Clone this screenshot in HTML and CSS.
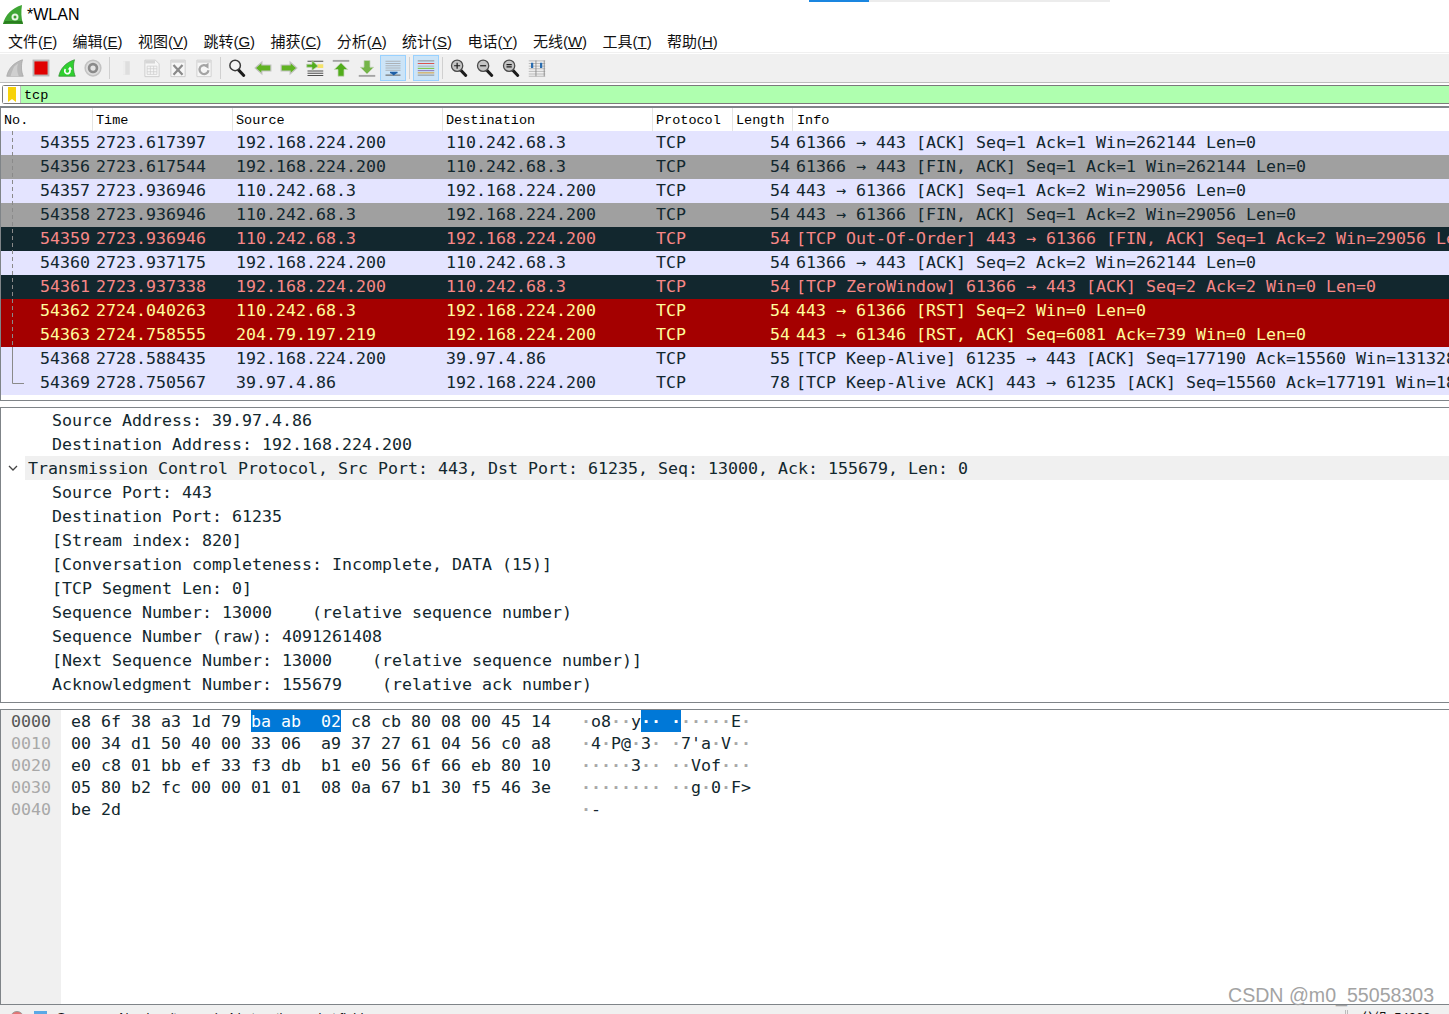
FILE: index.html
```html
<!DOCTYPE html>
<html lang="zh-CN">
<head>
<meta charset="utf-8">
<title>*WLAN</title>
<link rel="stylesheet" href="styles.css">
</head>
<body>
<div class="app">
  <div class="tabline"><span class="tab-blue"></span><span class="tab-gray"></span></div>
  <header class="titlebar">
    <svg class="app-icon" width="20" height="20" viewBox="0 0 20 20"><path d="M0 19C2 10 9 3 19 0c-1 6-1 13 1 19z" fill="#3fa535"/><path d="M0 19c6-1 13-1 20 0l-1-3H2z" fill="#2a7d1f"/><circle cx="12" cy="12" r="3.500" fill="#e8f5e4"/><circle cx="12" cy="12" r="1.500" fill="#3c9a2c"/></svg>
    <span class="title-text">*WLAN</span>
  </header>
  <nav class="menubar">
    <span class="menu-item">文件(<u>F</u>)</span>
    <span class="menu-item">编辑(<u>E</u>)</span>
    <span class="menu-item">视图(<u>V</u>)</span>
    <span class="menu-item">跳转(<u>G</u>)</span>
    <span class="menu-item">捕获(<u>C</u>)</span>
    <span class="menu-item">分析(<u>A</u>)</span>
    <span class="menu-item">统计(<u>S</u>)</span>
    <span class="menu-item">电话(<u>Y</u>)</span>
    <span class="menu-item">无线(<u>W</u>)</span>
    <span class="menu-item">工具(<u>T</u>)</span>
    <span class="menu-item">帮助(<u>H</u>)</span>
  </nav>
  <div class="toolbar">
    <span class="tool"><svg viewBox="0 0 24 24"><path d="M1 23C3 13 10 5 22 1c-2 7-2 15 1 22z" fill="#b9b9b9" stroke="#a6a6a6"/><path d="M11 10C9 14 7 19 6 23h11c-2-5-3-11-1-17z" fill="#cfcfcf"/></svg></span>
    <span class="tool"><svg viewBox="0 0 24 24"><rect x="2" y="2" width="20" height="20" fill="#e00000" stroke="#b9b9b9" stroke-width="2.500"/></svg></span>
    <span class="tool"><svg viewBox="0 0 24 24"><path d="M1 23C3 13 10 5 22 1c-2 7-2 15 1 22z" fill="#2fd02f" stroke="#3a8f3a"/><path d="M16 13v3a3.500 3.500 0 1 1-6-2.400" fill="none" stroke="#fff" stroke-width="2.300"/><path d="M13 14l3-4 3 4z" fill="#fff"/></svg></span>
    <span class="tool"><svg viewBox="0 0 24 24"><circle cx="12" cy="12" r="10.500" fill="#dcdcdc" stroke="#c2c2c2" stroke-width="2"/><circle cx="12" cy="12" r="7" fill="#8a8a8a"/><circle cx="12" cy="12" r="3.500" fill="#e4e4e4"/></svg></span>
    <span class="tool-sep"></span>
    <span class="tool"><svg viewBox="0 0 24 24"><path d="M8 3h9v18H8z" fill="#dedede"/><path d="M8 3h3v18H8z" fill="#ededed"/></svg></span>
    <span class="tool"><svg viewBox="0 0 24 24"><path d="M2.500 1.500h14l5 5v17h-19z" fill="#f6f6f6" stroke="#c4c4c4"/><path d="M5.500 9.500h13v11h-13zM5.500 13h13M5.500 17h13M9.800 9.500v11M14.200 9.500v11" fill="none" stroke="#cdcdcd"/><path d="M3 2h13v4H3z" fill="#d6d6d6"/></svg></span>
    <span class="tool"><svg viewBox="0 0 24 24"><path d="M2.500 1.500h19v22h-19z" fill="#f6f6f6" stroke="#c0c0c0"/><path d="M3 2h18v3H3z" fill="#d8d8d8"/><path d="M6 8l12 13M18 8L6 21" stroke="#8a8a8a" stroke-width="3"/></svg></span>
    <span class="tool"><svg viewBox="0 0 24 24"><path d="M2.500 1.500h19v22h-19z" fill="#f6f6f6" stroke="#c8c8c8"/><path d="M3 2h18v3H3z" fill="#d8d8d8"/><path d="M16.500 10a6 6 0 1 0 1.500 5" fill="none" stroke="#a4a4a4" stroke-width="3"/><path d="M12 9l6-4v8z" fill="#a4a4a4"/></svg></span>
    <span class="tool-sep"></span>
    <span class="tool"><svg viewBox="0 0 24 24"><path d="M14 14.500l7 7.500" stroke="#1c1c1c" stroke-width="4" stroke-linecap="round"/><circle cx="9.500" cy="8.500" r="7" fill="#f4f4f4" stroke="#3a3a3a" stroke-width="2"/></svg></span>
    <span class="tool"><svg viewBox="0 0 24 24"><path d="M1.500 12l9-8v4h12v8h-12v4z" fill="#60b322" stroke="#c2c2c2" stroke-width="1.500"/></svg></span>
    <span class="tool"><svg viewBox="0 0 24 24"><path d="M22.500 12l-9-8v4h-12v8h12v4z" fill="#60b322" stroke="#c2c2c2" stroke-width="1.500"/></svg></span>
    <span class="tool"><svg viewBox="0 0 24 24"><path d="M2 3h21M2 16h21M2 19h21M2 22h21" stroke="#4a4a4a" stroke-width="1.300"/><path d="M15 7h8v5h-8z" fill="#f4e36a"/><path d="M1 7h7V2l8 7.500L8 15v-4H1z" fill="#52ad1c" stroke="#b9c9ad"/></svg></span>
    <span class="tool"><svg viewBox="0 0 24 24"><path d="M1 2.500h22" stroke="#a4a4a4" stroke-width="2.500"/><path d="M12 5l9 9h-5v9H8v-9H3z" fill="#52ad1c" stroke="#c6d4bc"/></svg></span>
    <span class="tool"><svg viewBox="0 0 24 24"><path d="M1 22.500h22" stroke="#a4a4a4" stroke-width="2.500"/><path d="M12 20l9-9h-5V2H8v9H3z" fill="#74b548" stroke="#c6d4bc"/></svg></span>
    <span class="tool tool-on"><svg viewBox="0 0 24 24"><path d="M2 3h20M2 6h20M2 9h20M2 12h20M2 15h20" stroke="#a0a0a0"/><path d="M2 21.500h20" stroke="#6a6a6a" stroke-width="1.500"/><path d="M13 22l-5-4h10z" fill="#1f5fa6"/><path d="M8 17h10v2H8z" fill="#1f5fa6"/></svg></span>
    <span class="tool-sep"></span>
    <span class="tool tool-on"><svg viewBox="0 0 24 24"><path d="M1 2.500h22" stroke="#777"/><path d="M1 6h22" stroke="#d9534f" stroke-width="1.400"/><path d="M1 9.500h22" stroke="#a0a0a0"/><path d="M1 12.500h22" stroke="#7cc243" stroke-width="1.400"/><path d="M1 15.500h22" stroke="#8a78c0" stroke-width="1.400"/><path d="M1 18.500h22" stroke="#d6a13a" stroke-width="1.400"/><path d="M1 21.500h22" stroke="#777"/></svg></span>
    <span class="tool-sep"></span>
    <span class="tool"><svg viewBox="0 0 24 24"><path d="M14 14.500l7 7.500" stroke="#1c1c1c" stroke-width="4" stroke-linecap="round"/><circle cx="9.500" cy="9" r="7.500" fill="#c4c4c4" stroke="#4a4a4a" stroke-width="1.700"/><path d="M5.500 9h8M9.500 5v8" stroke="#1c1c1c" stroke-width="1.600"/></svg></span>
    <span class="tool"><svg viewBox="0 0 24 24"><path d="M14 14.500l7 7.500" stroke="#1c1c1c" stroke-width="4" stroke-linecap="round"/><circle cx="9.500" cy="9" r="7.500" fill="#c4c4c4" stroke="#4a4a4a" stroke-width="1.700"/><path d="M5.500 9h8" stroke="#1c1c1c" stroke-width="1.600"/></svg></span>
    <span class="tool"><svg viewBox="0 0 24 24"><path d="M14 14.500l7 7.500" stroke="#1c1c1c" stroke-width="4" stroke-linecap="round"/><circle cx="9.500" cy="9" r="7.500" fill="#c4c4c4" stroke="#4a4a4a" stroke-width="1.700"/><path d="M6 7.500h7M6 10.500h7" stroke="#1c1c1c" stroke-width="1.400"/></svg></span>
    <span class="tool"><svg viewBox="0 0 24 24"><path d="M1 2.500h22M1 6h22M1 9.500h22M1 13h22M1 16.500h22M1 20h22M1 23h22" stroke="#a8a8a8"/><path d="M10 2h1.200v21H10zM21 2h1.200v21H21z" fill="#8a8a8a"/><path d="M4 5h3v7H4zM16 5h3v7h-3z" fill="#2a6db0"/></svg></span>
  </div>
  <div class="filterbar">
    <span class="filter-mark"><svg width="10" height="15" viewBox="0 0 10 15"><path d="M1 0h8v15l-4-3-4 3z" fill="#f7d20a"/></svg></span>
    <span class="filter-text">tcp</span>
  </div>
  <section class="packets">
    <div class="cols">
      <span class="hcell">No.</span><span class="hcell">Time</span><span class="hcell">Source</span><span class="hcell">Destination</span><span class="hcell">Protocol</span><span class="hcell">Length</span><span class="hcell">Info</span>
    </div>
    <div class="row tcp"><span class="no">54355</span><span>2723.617397</span><span>192.168.224.200</span><span>110.242.68.3</span><span>TCP</span><span class="len">54</span><span>61366 → 443 [ACK] Seq=1 Ack=1 Win=262144 Len=0</span></div>
    <div class="row fin"><span class="no">54356</span><span>2723.617544</span><span>192.168.224.200</span><span>110.242.68.3</span><span>TCP</span><span class="len">54</span><span>61366 → 443 [FIN, ACK] Seq=1 Ack=1 Win=262144 Len=0</span></div>
    <div class="row tcp"><span class="no">54357</span><span>2723.936946</span><span>110.242.68.3</span><span>192.168.224.200</span><span>TCP</span><span class="len">54</span><span>443 → 61366 [ACK] Seq=1 Ack=2 Win=29056 Len=0</span></div>
    <div class="row fin"><span class="no">54358</span><span>2723.936946</span><span>110.242.68.3</span><span>192.168.224.200</span><span>TCP</span><span class="len">54</span><span>443 → 61366 [FIN, ACK] Seq=1 Ack=2 Win=29056 Len=0</span></div>
    <div class="row bad"><span class="no">54359</span><span>2723.936946</span><span>110.242.68.3</span><span>192.168.224.200</span><span>TCP</span><span class="len">54</span><span>[TCP Out-Of-Order] 443 → 61366 [FIN, ACK] Seq=1 Ack=2 Win=29056 Len=0</span></div>
    <div class="row tcp"><span class="no">54360</span><span>2723.937175</span><span>192.168.224.200</span><span>110.242.68.3</span><span>TCP</span><span class="len">54</span><span>61366 → 443 [ACK] Seq=2 Ack=2 Win=262144 Len=0</span></div>
    <div class="row bad"><span class="no">54361</span><span>2723.937338</span><span>192.168.224.200</span><span>110.242.68.3</span><span>TCP</span><span class="len">54</span><span>[TCP ZeroWindow] 61366 → 443 [ACK] Seq=2 Ack=2 Win=0 Len=0</span></div>
    <div class="row rst"><span class="no">54362</span><span>2724.040263</span><span>110.242.68.3</span><span>192.168.224.200</span><span>TCP</span><span class="len">54</span><span>443 → 61366 [RST] Seq=2 Win=0 Len=0</span></div>
    <div class="row rst"><span class="no">54363</span><span>2724.758555</span><span>204.79.197.219</span><span>192.168.224.200</span><span>TCP</span><span class="len">54</span><span>443 → 61346 [RST, ACK] Seq=6081 Ack=739 Win=0 Len=0</span></div>
    <div class="row tcp"><span class="no">54368</span><span>2728.588435</span><span>192.168.224.200</span><span>39.97.4.86</span><span>TCP</span><span class="len">55</span><span>[TCP Keep-Alive] 61235 → 443 [ACK] Seq=177190 Ack=15560 Win=131328 Len=1</span></div>
    <div class="row tcp"><span class="no">54369</span><span>2728.750567</span><span>39.97.4.86</span><span>192.168.224.200</span><span>TCP</span><span class="len">78</span><span>[TCP Keep-Alive ACK] 443 → 61235 [ACK] Seq=15560 Ack=177191 Win=18048 Len=0</span></div>
    <svg class="conv-line" width="24" height="264" viewBox="0 0 24 264"><path d="M0.500 0V216" class="conv-dash"/><path d="M0.500 216V252.500H12" class="conv-solid"/></svg>
  </section>
  <section class="details">
    <div class="dline sub">Source Address: 39.97.4.86</div>
    <div class="dline sub">Destination Address: 192.168.224.200</div>
    <div class="dline top"><svg class="chev" width="10" height="6" viewBox="0 0 10 6"><path d="M1 1l4 4 4-4" fill="none" stroke="#444" stroke-width="1.300"/></svg><span class="top-text">Transmission Control Protocol, Src Port: 443, Dst Port: 61235, Seq: 13000, Ack: 155679, Len: 0</span></div>
    <div class="dline sub">Source Port: 443</div>
    <div class="dline sub">Destination Port: 61235</div>
    <div class="dline sub">[Stream index: 820]</div>
    <div class="dline sub">[Conversation completeness: Incomplete, DATA (15)]</div>
    <div class="dline sub">[TCP Segment Len: 0]</div>
    <div class="dline sub">Sequence Number: 13000    (relative sequence number)</div>
    <div class="dline sub">Sequence Number (raw): 4091261408</div>
    <div class="dline sub">[Next Sequence Number: 13000    (relative sequence number)]</div>
    <div class="dline sub">Acknowledgment Number: 155679    (relative ack number)</div>
    <div class="dline sub">Acknowledgment number (raw): 1</div>
  </section>
  <section class="hex">
    <div class="gutter">
      <div class="hline off-cur">0000</div>
      <div class="hline">0010</div>
      <div class="hline">0020</div>
      <div class="hline">0030</div>
      <div class="hline">0040</div>
    </div>
    <div class="dump">
      <div class="hline">e8 6f 38 a3 1d 79 <span class="sel">ba ab  02</span> c8 cb 80 08 00 45 14   <i>·</i>o8<i>··</i>y<span class="sel"><i>··</i> <i>·</i></span><i>·····</i>E<i>·</i></div>
      <div class="hline">00 34 d1 50 40 00 33 06  a9 37 27 61 04 56 c0 a8   <i>·</i>4<i>·</i>P@<i>·</i>3<i>·</i> <i>·</i>7'a<i>·</i>V<i>··</i></div>
      <div class="hline">e0 c8 01 bb ef 33 f3 db  b1 e0 56 6f 66 eb 80 10   <i>·····</i>3<i>··</i> <i>··</i>Vof<i>···</i></div>
      <div class="hline">05 80 b2 fc 00 00 01 01  08 0a 67 b1 30 f5 46 3e   <i>········</i> <i>··</i>g<i>·</i>0<i>·</i>F&gt;</div>
      <div class="hline">be 2d                                              <i>·</i>-</div>
    </div>
  </section>
  <footer class="statusbar">
    <svg class="st-dot" width="16" height="16" viewBox="0 0 16 16"><circle cx="8" cy="8" r="6.500" fill="#e57373" stroke="#999"/></svg>
    <svg class="st-pen" width="16" height="16" viewBox="0 0 16 16"><rect x="1" y="1" width="13" height="13" fill="#5aa9e6"/><path d="M4 4h6v6H4z" fill="#fff"/></svg>
    <span class="st-text">Sequence Number (tcp.seq), 4 bytes: the packet field</span>
    <span class="st-split"></span>
    <span class="st-right">分组: 54369</span>
  </footer>
  <div class="watermark">CSDN @m0_55058303</div>
</div>
</body>
</html>
```
FILE: styles.css
```css
* { box-sizing: border-box; }
html, body { margin: 0; padding: 0; background: #fff; overflow: hidden; }
.app {
  position: relative;
  width: 1449px;
  height: 1014px;
  display: flex;
  flex-direction: column;
  overflow: hidden;
  background: #fff;
  color: #000;
}
.tabline { position: absolute; left: 809px; top: 0; display: flex; height: 2px; }
.tab-blue { width: 60px; background: #1a86e0; }
.tab-gray { width: 241px; background: #ececec; }

.titlebar {
  height: 28px;
  display: flex;
  align-items: center;
  padding: 2px 0 0 3px;
  gap: 4px;
  flex: none;
}
.title-text { font: 16px "Liberation Sans", sans-serif; }
.menubar {
  height: 25px;
  display: flex;
  align-items: center;
  gap: 15.4px;
  padding-left: 8px;
  border-bottom: 1px solid #f0f0f0;
  flex: none;
  font: 15px "Liberation Sans", "Noto Sans CJK SC", sans-serif;
}
.menu-item { white-space: nowrap; color: #111; }

.toolbar {
  height: 29px;
  flex: none;
  margin-top: 1px;
  padding: 0 0 0 2px;
  display: flex;
  align-items: center;
  background: #f0f0f0;
  border-bottom: 1px solid #bdbdbd;
}
.tool {
  width: 26px;
  height: 26px;
  display: flex;
  align-items: center;
  justify-content: center;
  flex: none;
  border: 1px solid transparent;
}
.tool svg { width: 18px; height: 18px; overflow: visible; }
.tool-on { background: #cce4f7; border-color: #99d1ff; }
.tool-sep {
  width: 7px;
  height: 22px;
  flex: none;
  background: linear-gradient(#d0d0d0, #d0d0d0) center / 1px 100% no-repeat;
}

.filterbar {
  height: 19px;
  margin-top: 2px;
  margin-left: 2px;
  flex: none;
  display: flex;
  align-items: stretch;
  background: #afffaf;
  border-top: 1px solid #7a7a7a;
  border-bottom: 1px solid #7a7a7a;
  border-left: 1px solid #7a7a7a;
  border-radius: 3px 0 0 3px;
}
.filter-mark {
  width: 18px;
  background: #fff;
  display: flex;
  align-items: center;
  justify-content: center;
  border-right: 1px solid #bdbdbd;
}
.filter-text {
  padding-left: 3px;
  font: 13.5px/19px "Liberation Mono", monospace;
}

.packets {
  position: relative;
  margin-top: 2px;
  height: 295px;
  flex: none;
  border-top: 2px solid #7f8488;
  border-bottom: 1px solid #7f8488;
  border-left: 1px solid #7f8488;
  overflow: hidden;
  font: 16.62px/24px "DejaVu Sans Mono", monospace;
  color: #12272e;
}
.cols, .row {
  display: grid;
  grid-template-columns: 92px 140px 210px 210px 80px 60px 1fr;
  white-space: pre;
}
.cols {
  height: 23px;
  font: 13.5px/25px "Liberation Mono", monospace;
  color: #000;
}
.hcell { padding-left: 3px; border-right: 1px solid #e4e4e4; overflow: hidden; }
.hcell:last-child { border-right: 0; padding-left: 4px; }
.row { height: 24px; line-height: 24px; }
.row span { padding-left: 3px; overflow: visible; }
.row .no { padding: 0 3px 0 0; text-align: right; }
.row .len { padding: 0 3px 0 0; text-align: right; }
.tcp { background: #e4e4ff; }
.fin { background: #a0a0a0; }
.bad { background: #12272e; color: #f78787; }
.rst { background: #a40000; color: #fffc9c; }
.conv-line { position: absolute; left: 11px; top: 23px; }
.conv-dash { fill: none; stroke: #8a8a8a; stroke-dasharray: 4 3; }
.conv-solid { fill: none; stroke: #8a8a8a; }

.details {
  margin-top: 6px;
  height: 296px;
  flex: none;
  overflow: hidden;
  border-top: 1px solid #7f8488;
  border-bottom: 1px solid #7f8488;
  border-left: 1px solid #7f8488;
  font: 16.62px/26px "DejaVu Sans Mono", monospace;
  color: #12272e;
}
.dline { height: 24px; white-space: pre; }
.sub { padding-left: 51px; }
.top { display: flex; align-items: center; padding-left: 7px; }
.chev { flex: none; margin-right: 7px; }
.top-text { flex: 1; height: 24px; background: #f0f0f0; padding-left: 3px; }

.hex {
  margin-top: 6px;
  height: 296px;
  flex: none;
  display: flex;
  border-top: 1px solid #7f8488;
  border-bottom: 1px solid #7f8488;
  border-left: 1px solid #7f8488;
  font: 16.62px/24px "DejaVu Sans Mono", monospace;
}
.gutter { width: 60px; flex: none; background: #f0f0f0; padding-left: 10px; color: #a8a8a8; }
.off-cur { color: #555; }
.dump { padding-left: 10px; color: #12272e; }
.hline { height: 22px; white-space: pre; }
.dump i { font-style: normal; color: #a8a8a8; font-weight: 700; }
.sel { display: inline-block; height: 22px; background: #0078d7; color: #fff; }
.dump .sel i { color: #fff; }

.statusbar {
  flex: 1;
  min-height: 0;
  background: #f0f0f0;
  display: flex;
  align-items: flex-start;
  overflow: hidden;
  padding: 5px 0 0 9px;
  font: 13px/16px "Liberation Sans", "Noto Sans CJK SC", sans-serif;
  color: #111;
}
.st-dot { flex: none; }
.st-pen { flex: none; margin-left: 8px; }
.st-text { margin-left: 8px; flex: 1; white-space: nowrap; }
.st-split { width: 3px; height: 16px; border-left: 1px solid #bbb; border-right: 1px solid #bbb; margin-right: 13px; flex: none; }
.st-right { width: 88px; flex: none; white-space: nowrap; }

.watermark {
  position: absolute;
  left: 1228px;
  top: 983px;
  font: 19.6px/24px "Liberation Sans", sans-serif;
  color: #a3a3a3;
}
```
